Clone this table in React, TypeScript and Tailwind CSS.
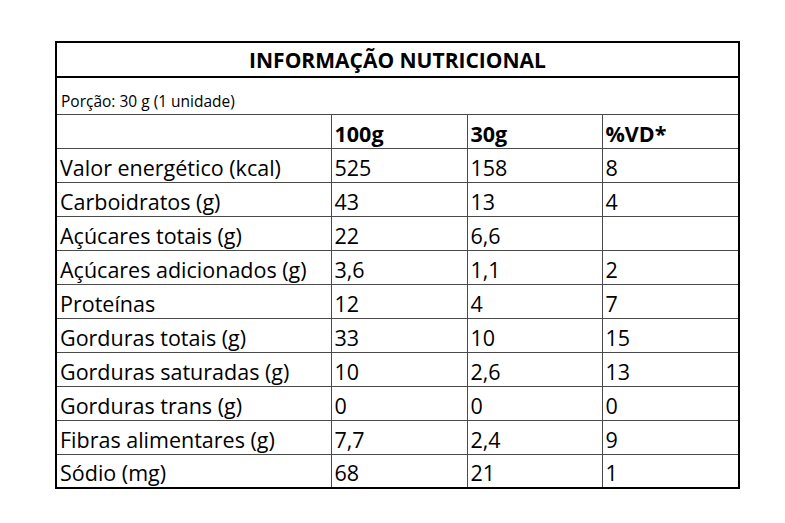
const rows: [string, string, string, string][] = [
  ["Valor energético (kcal)", "525", "158", "8"],
  ["Carboidratos (g)", "43", "13", "4"],
  ["Açúcares totais (g)", "22", "6,6", ""],
  ["Açúcares adicionados (g)", "3,6", "1,1", "2"],
  ["Proteínas", "12", "4", "7"],
  ["Gorduras totais (g)", "33", "10", "15"],
  ["Gorduras saturadas (g)", "10", "2,6", "13"],
  ["Gorduras trans (g)", "0", "0", "0"],
  ["Fibras alimentares (g)", "7,7", "2,4", "9"],
  ["Sódio (mg)", "68", "21", "1"],
];

const cell =
  "border border-[#4a4a4a] h-[34px] pl-[3px] pb-[2px] align-bottom leading-[24px] whitespace-nowrap";

export default function App() {
  return (
    <div className="min-h-screen bg-white pt-[41px] pl-[55px] font-['Open_Sans',sans-serif] text-black">
      <table className="w-[683px] table-fixed border-collapse border-2 border-black text-[21.5px]">
        <colgroup>
          <col className="w-[275px]" />
          <col className="w-[136px]" />
          <col className="w-[135px]" />
          <col className="w-[137px]" />
        </colgroup>
        <tbody>
          <tr>
            <td
              colSpan={4}
              className="h-[35px] border-b-2 border-black text-center align-middle text-[21px] font-bold leading-[24px]"
            >
              INFORMAÇÃO NUTRICIONAL
            </td>
          </tr>
          <tr>
            <td
              colSpan={4}
              className="h-[37px] border border-[#4a4a4a] pl-[4px] pb-[4px] align-bottom text-[15.5px] leading-[18px]"
            >
              Porção: 30 g (1 unidade)
            </td>
          </tr>
          <tr className="font-bold">
            <td className={cell}></td>
            <td className={cell}>100g</td>
            <td className={cell}>30g</td>
            <td className={cell}>%VD*</td>
          </tr>
          {rows.map((r) => (
            <tr key={r[0]}>
              {r.map((v, i) => (
                <td key={i} className={cell}>
                  {v}
                </td>
              ))}
            </tr>
          ))}
        </tbody>
      </table>
    </div>
  );
}
